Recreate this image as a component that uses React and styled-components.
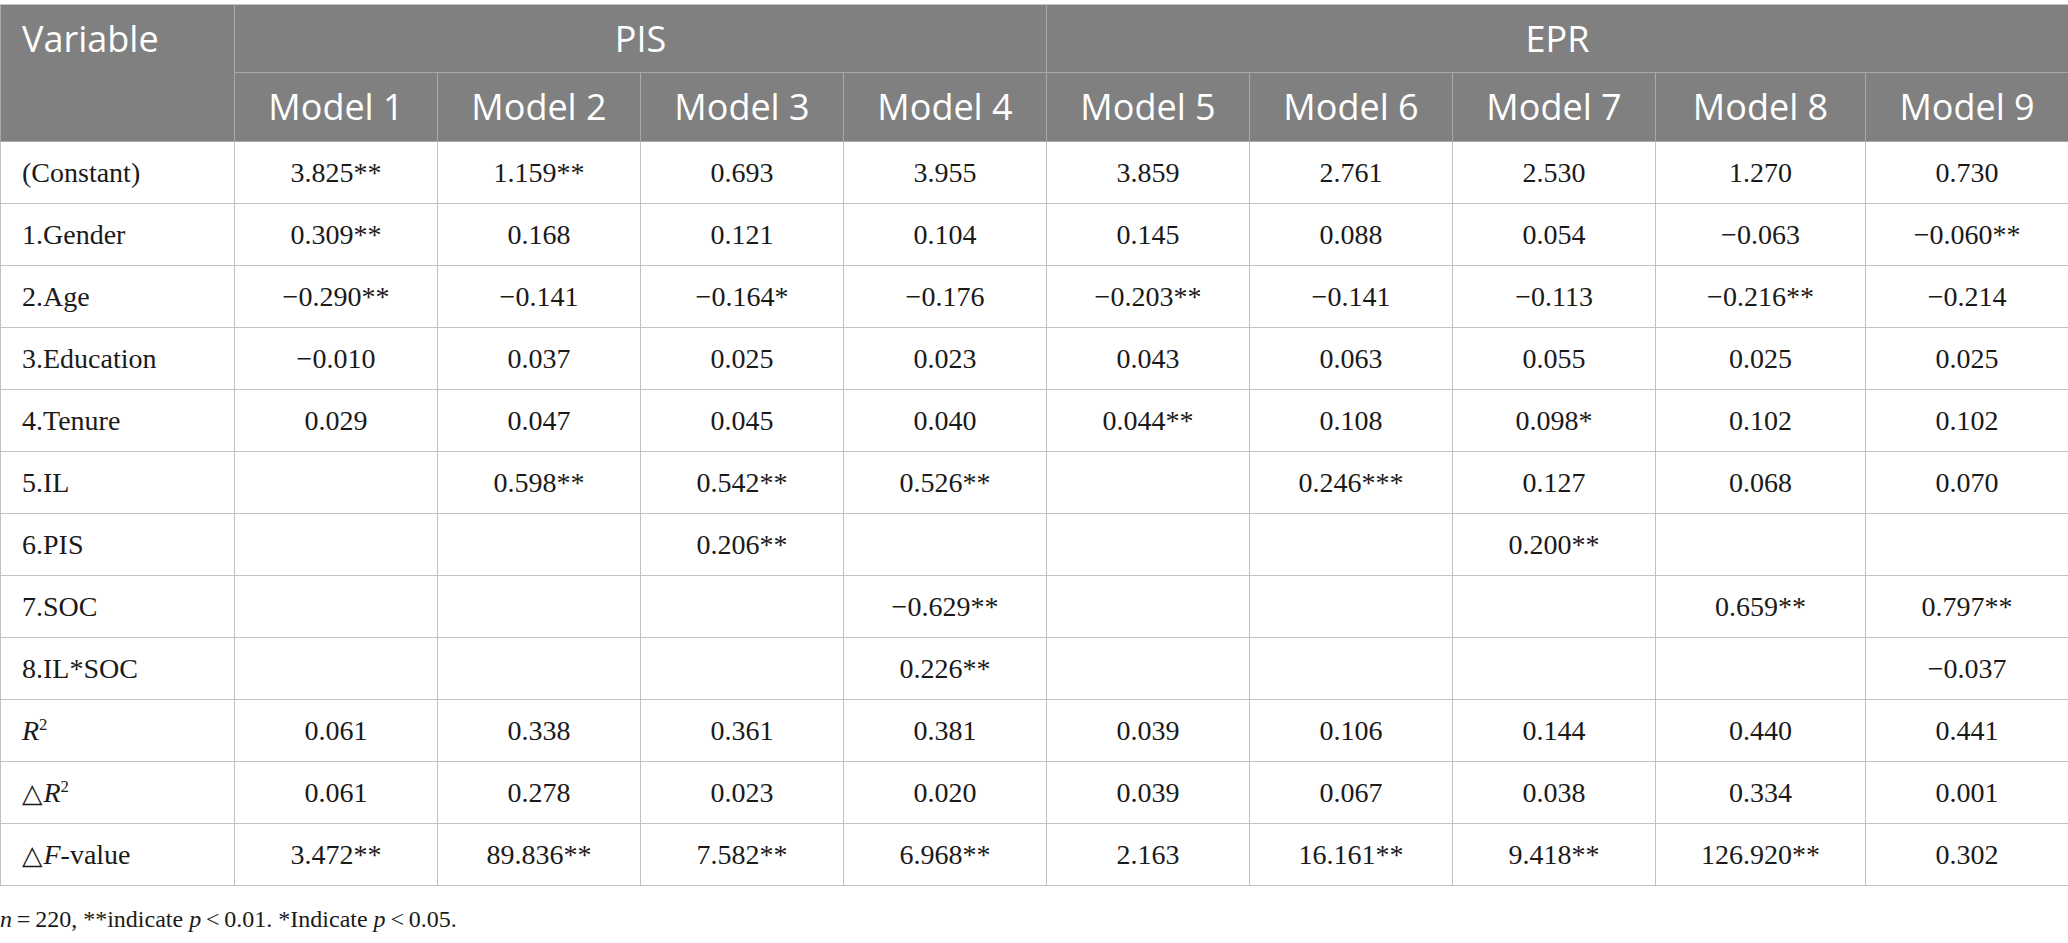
import React from "react";
import styled, { createGlobalStyle } from "styled-components";

const Global = createGlobalStyle`
  html, body { margin: 0; padding: 0; background: #ffffff; }
  body { font-family: "Liberation Serif", "Times New Roman", serif; }
`;

const Page = styled.div`
  padding-top: 4px;
  width: 2068px;
`;

const Table = styled.table`
  width: 2068px;
  border-collapse: collapse;
  table-layout: fixed;
`;

const Col = styled.col`
  width: ${(p) => p.$w}px;
`;

const HeadCell = styled.th`
  background: #7f807f;
  color: #ffffff;
  font-family: "Open Sans", "Noto Sans", sans-serif;
  font-weight: 400;
  font-size: 36px;
  line-height: 1;
  height: ${(p) => p.$h || 68}px;
  padding: 0;
  border: 1px solid #a9a9a9;
  border-top-color: #c4c4c4;
  text-align: ${(p) => (p.$left ? "left" : "center")};
  vertical-align: ${(p) => (p.$top ? "top" : "middle")};
  padding-left: ${(p) => (p.$left ? "21px" : "0")};
  padding-top: ${(p) => (p.$top ? "16px" : "0")};
  box-sizing: border-box;
`;

const Row = styled.tr`
  height: 62px;
`;

const Cell = styled.td`
  font-family: "Liberation Serif", "Times New Roman", serif;
  font-size: 28px;
  color: #1a1a1a;
  border: 1px solid #c2c2c2;
  padding: 0;
  padding-left: ${(p) => (p.$label ? "21px" : "0")};
  text-align: ${(p) => (p.$label ? "left" : "center")};
  vertical-align: middle;
  white-space: nowrap;
`;

const Em = styled.i`
  font-style: italic;
`;

const Sup = styled.sup`
  font-size: 0.6em;
  vertical-align: 0.6em;
  line-height: 0;
`;

const Tri = styled.span`
  font-family: "DejaVu Sans", sans-serif;
  font-size: 0.95em;
  margin-right: 1px;
`;

const Note = styled.p`
  margin: 20px 0 0 0;
  font-family: "Liberation Serif", "Times New Roman", serif;
  font-size: 24px;
  color: #1a1a1a;
`;

const thin = "\u2009";

const labels = [
  "(Constant)",
  "1.Gender",
  "2.Age",
  "3.Education",
  "4.Tenure",
  "5.IL",
  "6.PIS",
  "7.SOC",
  "8.IL*SOC",
  <><Em>R</Em><Sup>2</Sup></>,
  <><Tri>△</Tri><Em>R</Em><Sup>2</Sup></>,
  <><Tri>△</Tri><Em>F</Em>-value</>,
];

const data = [
  ["3.825**", "1.159**", "0.693", "3.955", "3.859", "2.761", "2.530", "1.270", "0.730"],
  ["0.309**", "0.168", "0.121", "0.104", "0.145", "0.088", "0.054", "−0.063", "−0.060**"],
  ["−0.290**", "−0.141", "−0.164*", "−0.176", "−0.203**", "−0.141", "−0.113", "−0.216**", "−0.214"],
  ["−0.010", "0.037", "0.025", "0.023", "0.043", "0.063", "0.055", "0.025", "0.025"],
  ["0.029", "0.047", "0.045", "0.040", "0.044**", "0.108", "0.098*", "0.102", "0.102"],
  ["", "0.598**", "0.542**", "0.526**", "", "0.246***", "0.127", "0.068", "0.070"],
  ["", "", "0.206**", "", "", "", "0.200**", "", ""],
  ["", "", "", "−0.629**", "", "", "", "0.659**", "0.797**"],
  ["", "", "", "0.226**", "", "", "", "", "−0.037"],
  ["0.061", "0.338", "0.361", "0.381", "0.039", "0.106", "0.144", "0.440", "0.441"],
  ["0.061", "0.278", "0.023", "0.020", "0.039", "0.067", "0.038", "0.334", "0.001"],
  ["3.472**", "89.836**", "7.582**", "6.968**", "2.163", "16.161**", "9.418**", "126.920**", "0.302"],
];

const widths = [234, 203, 203, 203, 203, 203, 203, 203, 210, 203];

export default function App() {
  return (
    <Page>
      <Global />
      <Table>
        <colgroup>
          {widths.map((w, i) => (
            <Col key={i} $w={w} />
          ))}
        </colgroup>
        <thead>
          <tr>
            <HeadCell rowSpan={2} $left $top $h={137}>
              Variable
            </HeadCell>
            <HeadCell colSpan={4}>PIS</HeadCell>
            <HeadCell colSpan={5}>EPR</HeadCell>
          </tr>
          <tr>
            {Array.from({ length: 9 }, (_, i) => (
              <HeadCell key={i} $h={69}>
                Model {i + 1}
              </HeadCell>
            ))}
          </tr>
        </thead>
        <tbody>
          {data.map((row, r) => (
            <Row key={r}>
              <Cell $label>{labels[r]}</Cell>
              {row.map((v, c) => (
                <Cell key={c}>{v}</Cell>
              ))}
            </Row>
          ))}
        </tbody>
      </Table>
      <Note>
        <Em>n</Em>{thin}={thin}220, **indicate <Em>p</Em>{thin}&lt;{thin}0.01. *Indicate <Em>p</Em>{thin}&lt;{thin}0.05.
      </Note>
    </Page>
  );
}
